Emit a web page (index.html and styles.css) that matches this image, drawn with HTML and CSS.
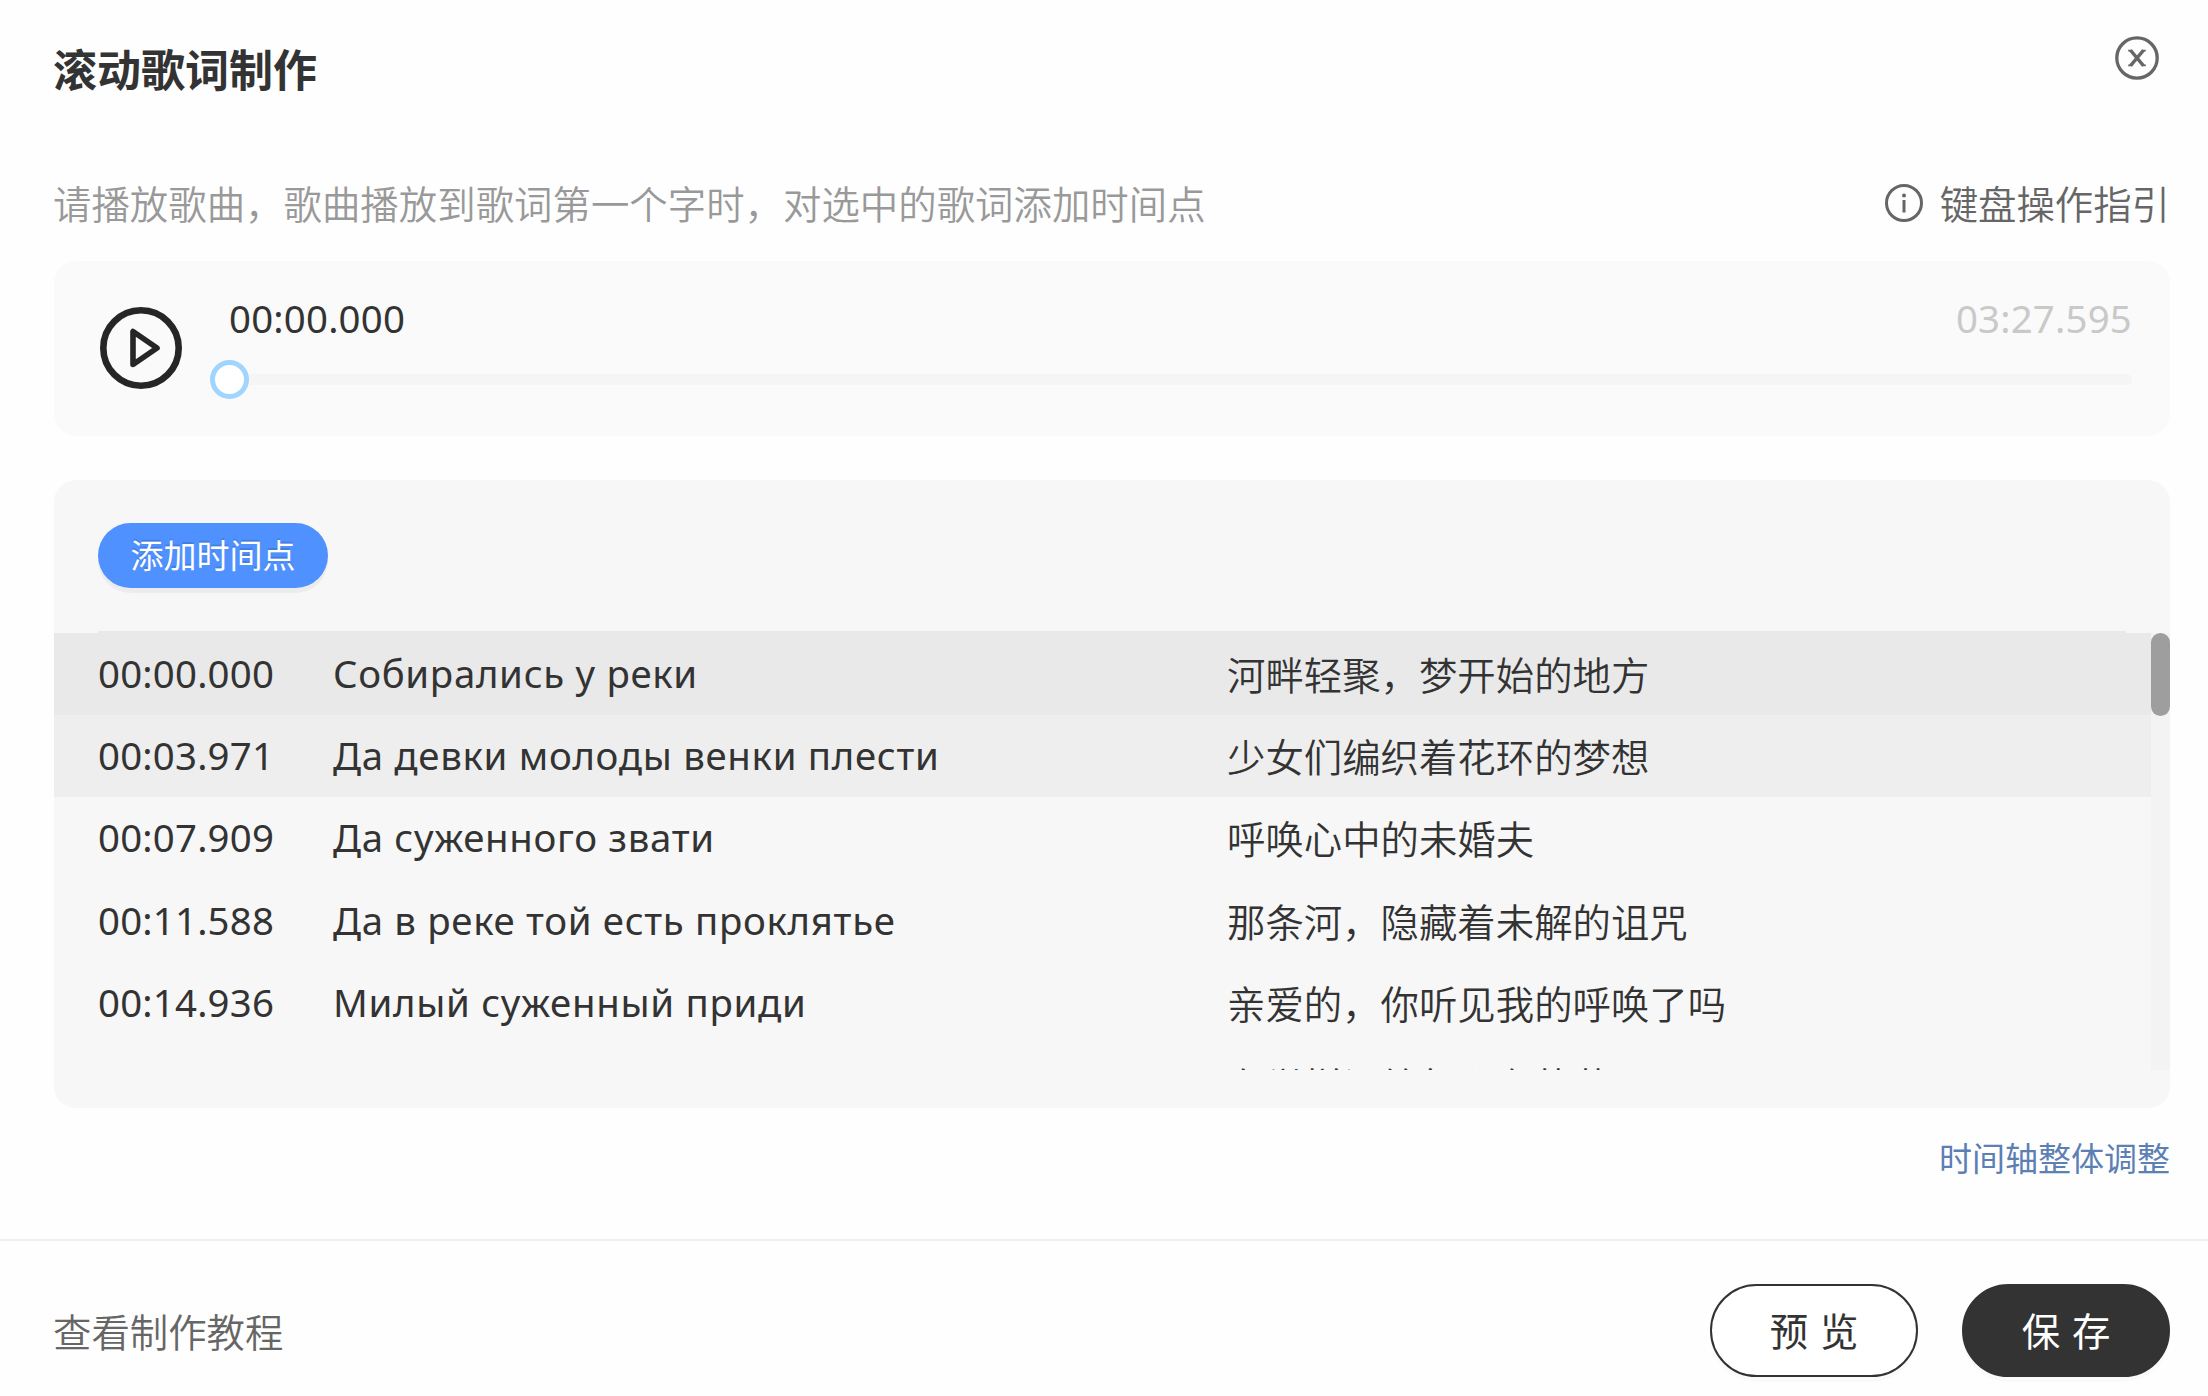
FILE: index.html
```html
<!DOCTYPE html>
<html lang="zh-CN">
<head>
<meta charset="utf-8">
<title>滚动歌词制作</title>
<link rel="stylesheet" href="styles.css">
</head>
<body>
<main class="dialog">
  <header class="header">
    <h1 class="title">滚动歌词制作</h1>
    <button class="close" aria-label="关闭">
      <svg class="close-icon" viewBox="0 0 44 44"><circle cx="22" cy="22" r="20.2"/><path d="M15.6 14.4 28.4 29.6M28.4 14.4 15.6 29.6"/><path class="serif" d="M13.2 14.6h4M26.8 14.6h4M13.2 29.4h4M26.8 29.4h4"/></svg>
    </button>
  </header>

  <div class="hint-row">
    <p class="hint">请播放歌曲，歌曲播放到歌词第一个字时，对选中的歌词添加时间点</p>
    <a class="guide">
      <svg class="info-icon" viewBox="0 0 38 38"><circle cx="19" cy="19" r="17.5"/><path d="M19 16v12.5"/><circle class="dot" cx="19" cy="11.5" r="2"/></svg>
      <span>键盘操作指引</span>
    </a>
  </div>

  <section class="player">
    <svg class="play-icon" viewBox="0 0 82 82"><circle cx="41" cy="41" r="37.7"/><path d="M33 24.5v33l24-16.5z"/></svg>
    <div class="player-main">
      <div class="times"><span class="time">00:00.000</span><span class="time total">03:27.595</span></div>
      <div class="progress"><span class="handle"></span></div>
    </div>
  </section>

  <section class="lyrics">
    <div class="toolbar"><button class="add">添加时间点</button></div>
    <div class="list">
      <div class="rows">
        <div class="row active"><span class="time">00:00.000</span><span class="ru">Собирались у реки</span><span class="zh">河畔轻聚，梦开始的地方</span></div>
        <div class="row next"><span class="time">00:03.971</span><span class="ru">Да девки молоды венки плести</span><span class="zh">少女们编织着花环的梦想</span></div>
        <div class="row"><span class="time">00:07.909</span><span class="ru">Да суженного звати</span><span class="zh">呼唤心中的未婚夫</span></div>
        <div class="row"><span class="time">00:11.588</span><span class="ru">Да в реке той есть проклятье</span><span class="zh">那条河，隐藏着未解的诅咒</span></div>
        <div class="row"><span class="time">00:14.936</span><span class="ru">Милый суженный приди</span><span class="zh">亲爱的，你听见我的呼唤了吗</span></div>
        <div class="row"><span class="time"></span><span class="ru"></span><span class="zh">在觉样记给每心有的花</span></div>
      </div>
      <div class="scrollbar"><div class="thumb"></div></div>
    </div>
  </section>

  <div class="adjust-row"><a class="adjust">时间轴整体调整</a></div>

  <footer class="footer">
    <a class="tutorial">查看制作教程</a>
    <div class="actions">
      <button class="btn">预览</button>
      <button class="btn primary">保存</button>
    </div>
  </footer>
</main>
</body>
</html>
```
FILE: styles.css
```css
* { box-sizing: border-box; margin: 0; padding: 0; }

body {
  width: 2208px;
  height: 1396px;
  overflow: hidden;
  background: #fefefe;
  color: #333;
  font-family: "Noto Sans", "Noto Sans CJK SC", sans-serif;
  font-size: 38.4px;
  line-height: 56px;
}

button { font: inherit; color: inherit; background: none; border: 0; }
svg { display: block; flex: none; fill: none; }

.dialog { display: flex; flex-direction: column; height: 100%; }

.header {
  display: flex;
  justify-content: space-between;
  height: 174px;
  padding: 36px 49px 0 53px;
}
.title { margin-top: -2px; font-size: 44px; line-height: 68px; font-weight: 700; font-family: "Noto Sans CJK SC", sans-serif; }
.close { width: 44px; height: 44px; }
.close-icon { width: 44px; height: 44px; stroke: #666; stroke-width: 3.3; }
.close-icon .serif { stroke-width: 1.8; }

.hint-row {
  display: flex;
  justify-content: space-between;
  height: 87px;
  padding: 0 38px 0 53px;
  font-family: "Noto Sans CJK SC", sans-serif;
}
.hint { color: #999; font-weight: 350; letter-spacing: .03px; }
.guide { display: flex; gap: 17px; color: #666; font-weight: 350; }
.info-icon { width: 38px; height: 38px; margin-top: 10px; stroke: #666; stroke-width: 3; }
.info-icon .dot { fill: #666; stroke: none; }

.player {
  display: flex;
  height: 175px;
  margin: 0 38px 44px 54px;
  padding: 46px 38px 0 46px;
  gap: 47px;
  border-radius: 22px;
  background: #fafafa;
}
.play-icon { width: 82px; height: 82px; stroke: #262626; stroke-width: 6.6; }
.play-icon path { stroke-width: 5.6; stroke-linejoin: round; }
.player-main { flex: 1; margin-top: -17px; }
.times { display: flex; justify-content: space-between; height: 84px; }
.time { letter-spacing: .2px; }
.total { color: #c9c9c9; }
.progress { display: flex; align-items: center; height: 11px; border-radius: 6px; background: #f5f5f5; }
.handle { width: 39px; height: 39px; margin-left: -19px; flex: none; border: 5px solid #9fd5ff; border-radius: 50%; background: #fff; }

.lyrics { height: 628px; margin: 0 38px 0 54px; border-radius: 22px; background: #f7f7f7; }
.toolbar { height: 153px; margin: 0 44px; padding-top: 43px; border-bottom: 2px solid #e9e9e9; }
.add {
  display: block;
  width: 230px;
  height: 65px;
  padding-bottom: 2px;
  border-radius: 33px;
  background: #4f91ff;
  box-shadow: 0 5px 0 rgba(0, 0, 0, .045);
  color: #fff;
  font-family: "Noto Sans CJK SC", sans-serif;
  font-size: 33px;
  line-height: 63px;
  text-shadow: 0 -2px 0 rgba(0, 0, 0, .12);
}
.list { display: flex; height: 437px; overflow: hidden; }
.rows { flex: 1; }
.row { display: grid; grid-template-columns: 235px 894px 1fr; height: 82.2px; padding-left: 44px; line-height: 80px; }
.active { background: #e9e9e9; }
.next { background: #eee; }
.ru { letter-spacing: .68px; }
.zh { font-family: "Noto Sans CJK SC", sans-serif; font-weight: 350; }
.scrollbar { width: 19px; background: #f3f3f3; }
.thumb { height: 83px; border-radius: 9.5px; background: #9e9e9e; }

.adjust-row { display: flex; justify-content: flex-end; height: 131px; padding: 21px 38px 0 0; }
.adjust { color: #5c7fb4; font: 400 33px/56px "Noto Sans CJK SC", sans-serif; }

.footer {
  display: flex;
  justify-content: space-between;
  flex: 1;
  padding: 43px 38px 0 53px;
  border-top: 2px solid #f1f1f1;
  font-family: "Noto Sans CJK SC", sans-serif;
}
.tutorial { color: #666; font-weight: 350; line-height: 93px; }
.actions { display: flex; gap: 44px; }
.btn {
  width: 208px;
  height: 93px;
  padding-bottom: 2px;
  border: 2px solid #333;
  border-radius: 47px;
  background: #fff;
  box-shadow: 0 5px 0 rgba(0, 0, 0, .015);
  letter-spacing: 11.8px;
  text-indent: 11.8px;
  font-size: 38.4px;
  line-height: 87px;
}
.primary { background: #333; color: #fff; }
```
